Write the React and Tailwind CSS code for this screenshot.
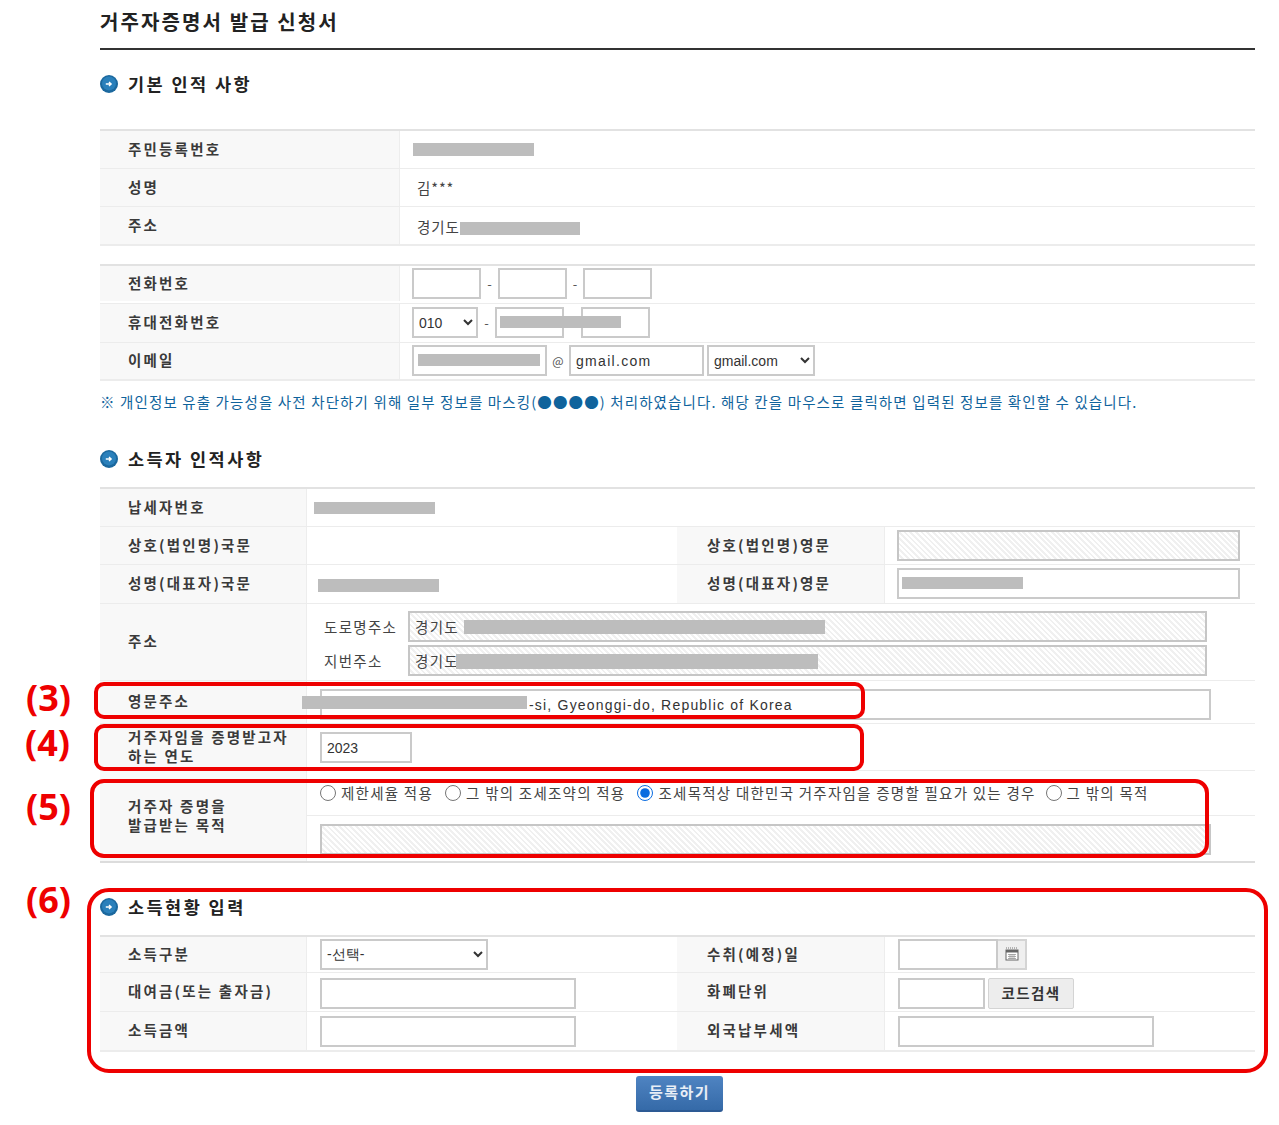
import React from "react";

const hatch =
  "border-2 border-[#c6c6c6] bg-[repeating-linear-gradient(45deg,#ffffff_0px,#ffffff_2px,#f0f0f0_2px,#f0f0f0_4px)]";
const inputBase =
  "block h-[31px] border-2 border-[#cacaca] bg-white px-[5px] text-[14px] text-[#333] outline-none font-['Liberation_Sans',sans-serif]";

function Bullet() {
  return (
    <svg width="18" height="18" viewBox="0 0 18 18" className="shrink-0">
      <circle cx="9" cy="9" r="9" fill="#1b689e" />
      <circle cx="9" cy="8.4" r="7" fill="#2a80bb" />
      <path d="M5.8 9h5.4M9 7 11.2 9 9 11" fill="none" stroke="#fff" strokeWidth="1.3" />
    </svg>
  );
}

function Heading({ children, className }) {
  return (
    <div className={`flex items-center gap-[10px] text-[17.5px] font-bold tracking-[2.45px] text-[#222] ${className}`}>
      <Bullet />
      <span className="leading-[20px]">{children}</span>
    </div>
  );
}

function Label({ children, className = "" }) {
  return (
    <div
      className={`flex shrink-0 items-center self-stretch border-r border-[#ededed] bg-[#f8f8f8] pl-[28px] text-[14.5px] leading-[19px] font-bold tracking-[2.2px] text-[#3a3a3a] ${className}`}
    >
      <div className="-translate-y-[1px]">{children}</div>
    </div>
  );
}

function Row({ children, className = "h-[38.5px]" }) {
  return <div className={`flex items-center border-b border-[#ececec] ${className}`}>{children}</div>;
}

function Table({ children, className = "" }) {
  return <div className={`border-t-2 border-[#e2e2e2] ${className}`}>{children}</div>;
}

function Radio({ label, checked, className = "" }) {
  return (
    <label className={`flex items-center text-[14.5px] tracking-[1.25px] text-[#444] ${className}`}>
      <input type="radio" name="purpose" defaultChecked={checked} className="m-0 mr-[5px] h-[16px] w-[16px] accent-[#0a6ce0]" />
      {label}
    </label>
  );
}

function Mask({ className }) {
  return <div className={`absolute bg-[#bdbdbd] ${className}`} />;
}

function RedBox({ className }) {
  return <div className={`pointer-events-none absolute rounded-[10px] border-[4px] border-[#ee0000] ${className}`} />;
}

function Tag({ children, className }) {
  return (
    <div className={`absolute text-[36px] leading-[40px] font-bold text-[#ee0000] font-['Open_Sans',sans-serif] ${className}`}>
      {children}
    </div>
  );
}

function Calendar() {
  return (
    <svg width="14" height="14" viewBox="0 0 14 14">
      <path d="M1 1h1M3 1h1M5 1h1M7 1h1M9 1h1M11 1h1" stroke="#777" strokeWidth="1" />
      <rect x="1" y="3" width="12" height="10" fill="#fff" stroke="#666" />
      <rect x="1" y="3" width="12" height="2.5" fill="#666" />
      <path d="M3 7.5h8M3 9.5h8M3 11.5h8M5 7v5M7 7v5M9 7v5" stroke="#999" strokeWidth="0.8" />
    </svg>
  );
}

export default function App() {
  return (
    <div className="relative h-[1125px] w-[1279px] overflow-hidden bg-white font-['Noto_Sans_CJK_KR','Liberation_Sans',sans-serif]">
      <div className="ml-[100px] w-[1155px]">
        <div className="h-[50px] border-b-2 border-[#333] pt-[8px] text-[20px] leading-[28px] font-bold tracking-[2.1px] text-[#222]">
          거주자증명서 발급 신청서
        </div>

        <Heading className="mt-[25px] h-[18px]">기본 인적 사항</Heading>

        <Table className="mt-[36px] border-t">
          <Row className="h-[37.5px]">
            <Label className="w-[300px]">주민등록번호</Label>
          </Row>
          <Row>
            <Label className="w-[300px]">성명</Label>
            <div className="pl-[17px] pt-[2px] text-[14.5px] tracking-[0.9px] text-[#444]">김***</div>
          </Row>
          <Row className="h-[39px] border-b-2 border-[#dcdcdc]">
            <Label className="w-[300px]">주소</Label>
            <div className="pl-[17px] pt-[3px] text-[14.5px] tracking-[0.9px] text-[#444]">경기도</div>
          </Row>
        </Table>

        <Table className="mt-[18px]">
          <Row className="h-[38px] pb-[2px]">
            <Label className="w-[300px]">전화번호</Label>
            <input className={`${inputBase} ml-[12px] w-[69px]`} />
            <span className="w-[17px] text-center text-[13px] text-[#555]">-</span>
            <input className={`${inputBase} w-[69px]`} />
            <span className="w-[16px] text-center text-[13px] text-[#555]">-</span>
            <input className={`${inputBase} w-[69px]`} />
          </Row>
          <Row>
            <Label className="w-[300px]">휴대전화번호</Label>
            <select className={`${inputBase} ml-[12px] w-[66px] pl-[1px]`} defaultValue="010">
              <option>010</option>
            </select>
            <span className="w-[17px] text-center text-[13px] text-[#555]">-</span>
            <input className={`${inputBase} w-[69px]`} />
            <span className="w-[17px]" />
            <input className={`${inputBase} w-[69px]`} />
          </Row>
          <Row className="h-[38.5px] border-b-2 border-[#dcdcdc]">
            <Label className="w-[300px]">이메일</Label>
            <input className={`${inputBase} ml-[12px] w-[135px]`} />
            <span className="w-[22px] text-center text-[12px] text-[#555]">@</span>
            <input className={`${inputBase} w-[135px] tracking-[1.3px]`} defaultValue="gmail.com" />
            <select className={`${inputBase} ml-[3px] w-[108px] pl-[1px]`} defaultValue="gmail.com">
              <option>gmail.com</option>
            </select>
          </Row>
        </Table>

        <p className="mt-[11px] h-[20px] text-[14.5px] leading-[20px] tracking-[1.13px] text-[#0f639c]">
          ※ 개인정보 유출 가능성을 사전 차단하기 위해 일부 정보를 마스킹(●●●●) 처리하였습니다. 해당 칸을 마우스로 클릭하면 입력된 정보를 확인할 수 있습니다.
        </p>

        <Heading className="mt-[38px] h-[18px]">소득자 인적사항</Heading>

        <Table className="mt-[19px]">
          <Row className="h-[37.5px]">
            <Label className="w-[207px]">납세자번호</Label>
          </Row>
          <Row>
            <Label className="w-[207px]">상호(법인명)국문</Label>
            <div className="w-[370px]" />
            <Label className="w-[208px] pl-[30px]">상호(법인명)영문</Label>
            <div className={`ml-[12px] h-[31px] w-[343px] ${hatch}`} />
          </Row>
          <Row>
            <Label className="w-[207px]">성명(대표자)국문</Label>
            <div className="w-[370px]" />
            <Label className="w-[208px] pl-[30px]">성명(대표자)영문</Label>
            <input className={`${inputBase} ml-[12px] w-[343px]`} />
          </Row>
          <Row className="h-[77px]">
            <Label className="w-[207px]">주소</Label>
            <div className="mt-[4px] flex flex-col gap-[3px] pl-[17px] text-[14.5px] tracking-[1.3px] text-[#444]">
              <div className="flex items-center">
                <span className="w-[84px]">도로명주소</span>
                <div className={`flex h-[31px] w-[799px] items-center px-[5px] ${hatch}`}>경기도</div>
              </div>
              <div className="flex items-center">
                <span className="w-[84px]">지번주소</span>
                <div className={`flex h-[31px] w-[799px] items-center px-[5px] ${hatch}`}>경기도</div>
              </div>
            </div>
          </Row>
          <Row className="h-[43px]">
            <Label className="w-[207px]">영문주소</Label>
            <input
              className={`${inputBase} ml-[13px] mt-[6px] w-[891px] pl-[207px] tracking-[1.2px]`}
              defaultValue="-si, Gyeonggi-do, Republic of Korea"
            />
          </Row>
          <Row className="h-[47px]">
            <Label className="w-[207px]">
              거주자임을 증명받고자
              <br />
              하는 연도
            </Label>
            <input className={`${inputBase} ml-[13px] mt-[2px] w-[92px]`} defaultValue="2023" />
          </Row>
          <div className="flex h-[92px] border-b-2 border-[#dcdcdc]">
            <Label className="w-[207px]">
              거주자 증명을
              <br />
              발급받는 목적
            </Label>
            <div className="flex-1">
              <div className="flex h-[45px] items-center border-b border-[#ececec] pt-[1px] pl-[13px]">
                <Radio label="제한세율 적용" />
                <Radio label="그 밖의 조세조약의 적용" className="ml-[12px]" />
                <Radio label="조세목적상 대한민국 거주자임을 증명할 필요가 있는 경우" checked className="ml-[12px]" />
                <Radio label="그 밖의 목적" className="ml-[10px]" />
              </div>
              <div className={`ml-[13px] mt-[8px] h-[31px] w-[891px] ${hatch}`} />
            </div>
          </div>
        </Table>

        <Heading className="mt-[35px] h-[18px]">소득현황 입력</Heading>

        <Table className="mt-[19px]">
          <Row className="h-[36.5px]">
            <Label className="w-[207px]">소득구분</Label>
            <select className={`${inputBase} ml-[13px] w-[168px] pl-[1px]`} defaultValue="-선택-">
              <option>-선택-</option>
            </select>
            <div className="w-[189px]" />
            <Label className="w-[208px] pl-[30px]">수취(예정)일</Label>
            <input className={`${inputBase} ml-[13px] w-[100px]`} />
            <div className="flex h-[31px] w-[29px] items-center justify-center border-2 border-l-0 border-[#d4d4d4] bg-[#efefef]">
              <Calendar />
            </div>
          </Row>
          <Row>
            <Label className="w-[207px]">대여금(또는 출자금)</Label>
            <input className={`${inputBase} ml-[13px] mt-[3px] w-[256px]`} />
            <div className="w-[101px]" />
            <Label className="w-[208px] pl-[30px]">화폐단위</Label>
            <input className={`${inputBase} ml-[13px] mt-[3px] w-[87px]`} />
            <button className="ml-[3px] mt-[3px] h-[31px] w-[86px] rounded-[2px] border border-[#d4d4d4] bg-[#ededed] text-[14.5px] font-bold tracking-[1.4px] text-[#333]">
              코드검색
            </button>
          </Row>
          <Row className="h-[40px] border-b-2 border-[#dcdcdc]">
            <Label className="w-[207px]">소득금액</Label>
            <input className={`${inputBase} ml-[13px] mt-[2px] w-[256px]`} />
            <div className="w-[101px]" />
            <Label className="w-[208px] pl-[30px]">외국납부세액</Label>
            <input className={`${inputBase} ml-[13px] mt-[2px] w-[256px]`} />
          </Row>
        </Table>

        <div className="mt-[24px] flex justify-center pl-[4px]">
          <button className="h-[36px] w-[87px] rounded-[3px] border-b-2 border-[#2d5a94] bg-gradient-to-b from-[#4f84c2] to-[#356aa8] text-[15px] font-bold tracking-[1.4px] text-[#e8eef6]">
            등록하기
          </button>
        </div>
      </div>

      <Mask className="left-[413px] top-[143px] h-[13px] w-[121px]" />
      <Mask className="left-[460px] top-[222px] h-[13px] w-[120px]" />
      <Mask className="left-[500px] top-[316px] h-[12px] w-[121px]" />
      <Mask className="left-[418px] top-[354px] h-[12px] w-[122px]" />
      <Mask className="left-[314px] top-[502px] h-[12px] w-[121px]" />
      <Mask className="left-[318px] top-[579px] h-[13px] w-[121px]" />
      <Mask className="left-[902px] top-[577px] h-[12px] w-[121px]" />
      <Mask className="left-[464px] top-[620px] h-[14px] w-[361px]" />
      <Mask className="left-[456px] top-[654px] h-[15px] w-[362px]" />
      <Mask className="left-[302px] top-[696px] h-[13px] w-[225px]" />

      <RedBox className="left-[94px] top-[682px] h-[37px] w-[771px]" />
      <RedBox className="left-[94px] top-[724px] h-[47px] w-[770px]" />
      <RedBox className="left-[90px] top-[779px] h-[79px] w-[1119px] rounded-[14px]" />
      <RedBox className="left-[87px] top-[888px] h-[185px] w-[1181px] rounded-[22px]" />

      <Tag className="left-[26px] top-[678px]">(3)</Tag>
      <Tag className="left-[25px] top-[723px]">(4)</Tag>
      <Tag className="left-[26px] top-[787px]">(5)</Tag>
      <Tag className="left-[26px] top-[880px]">(6)</Tag>
    </div>
  );
}
